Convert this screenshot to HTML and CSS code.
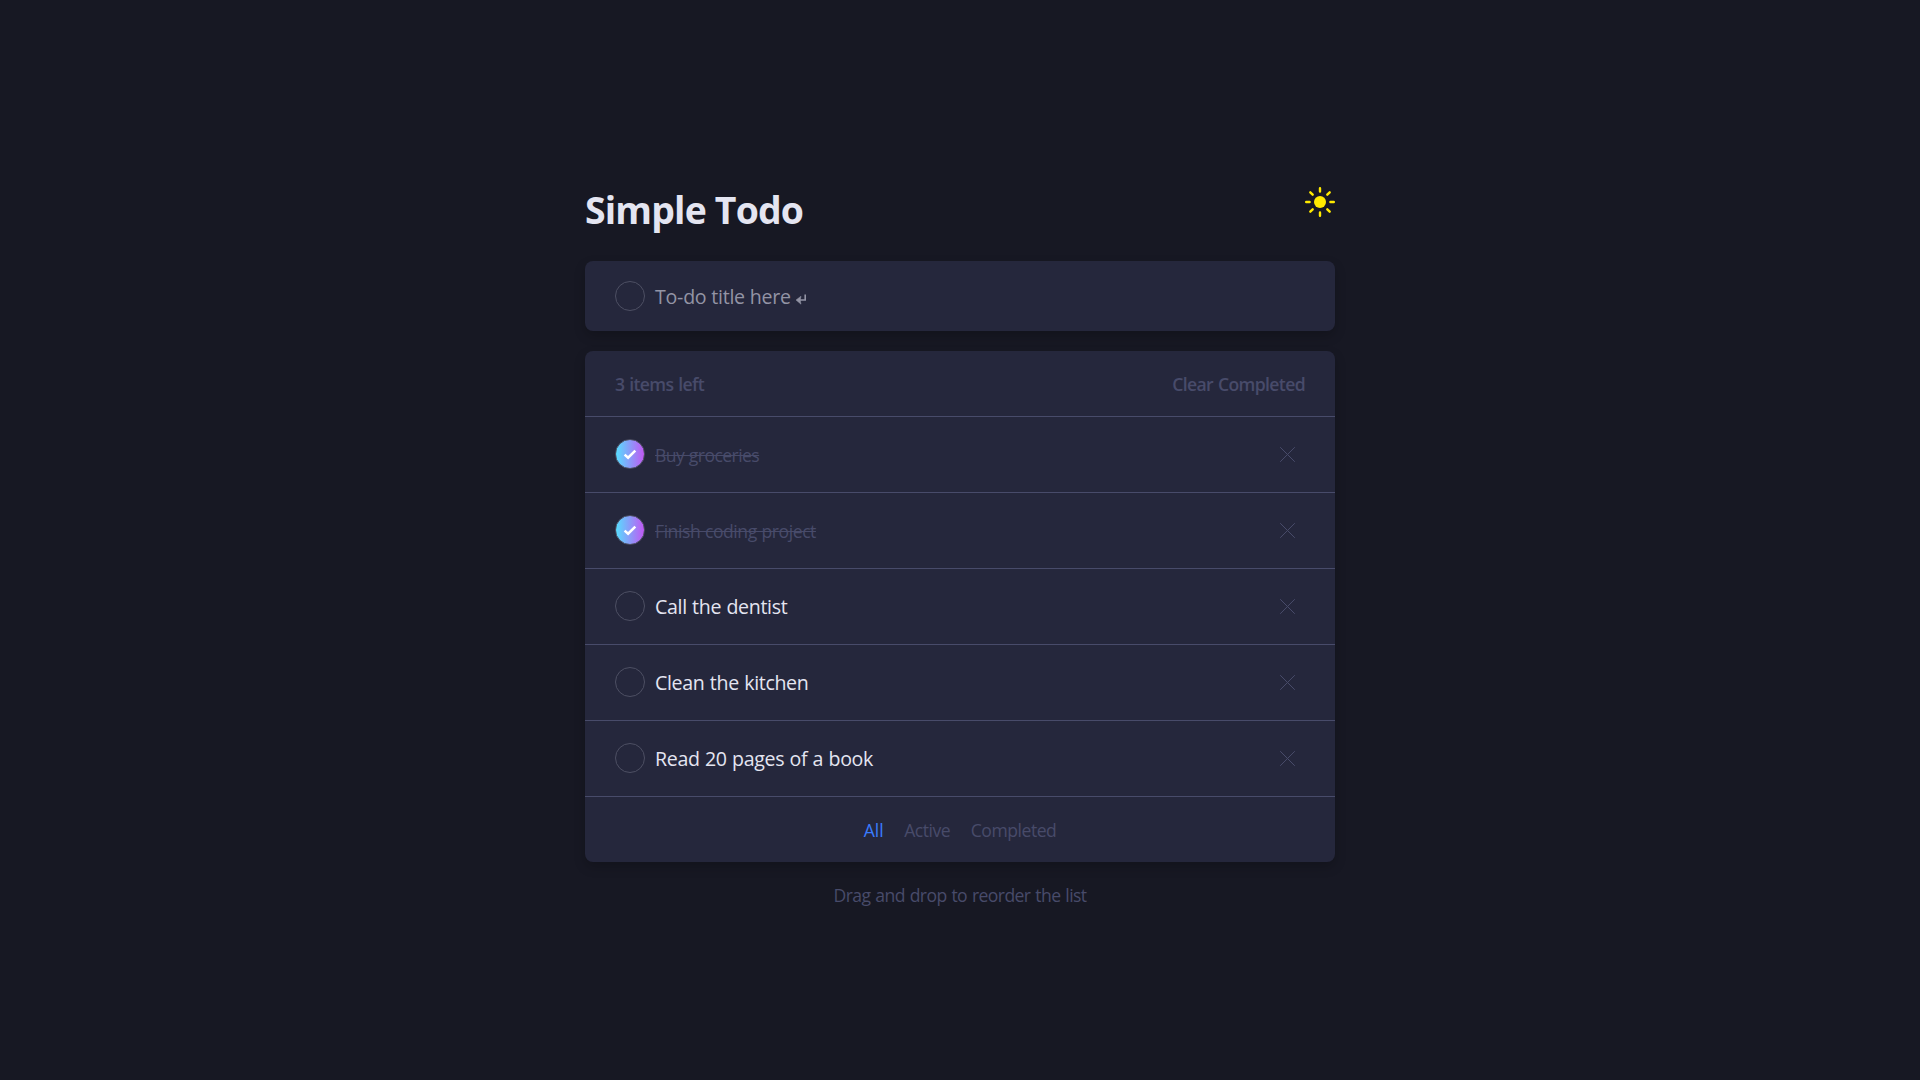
FILE: index.html
```
<!DOCTYPE html>
<html lang="en">
<head>
<meta charset="utf-8">
<title>Simple Todo</title>
<link rel="stylesheet" href="styles.css">
</head>
<body>
<svg width="0" height="0" class="defs" aria-hidden="true">
  <symbol id="cross" viewBox="0 0 15 15"><path d="M0.2 0.2L14.8 14.8M14.8 0.2L0.2 14.8" fill="none" stroke="currentColor" stroke-width="1"/></symbol>
  <symbol id="tick" viewBox="0 0 14 11"><path d="M1.6 5.6L5.1 8.7L12.3 1.7" fill="none" stroke="#fff" stroke-width="2.5"/></symbol>
</svg>
<main class="app">
  <header class="top">
    <h1 class="title">Simple Todo</h1>
    <svg class="sun" viewBox="0 0 30 30" fill="none" stroke="#ffea00" stroke-width="2.4" stroke-linecap="round">
      <circle cx="15" cy="15" r="6" fill="#ffea00" stroke="none"/>
      <path d="M15 1.2V4.6M15 25.4V28.8M1.2 15H4.6M25.4 15H28.8M5.3 5.3L7.7 7.7M22.3 22.3L24.7 24.7M5.3 24.7L7.7 22.3M22.3 7.7L24.7 5.3"/>
    </svg>
  </header>
  <section class="card entry">
    <span class="circle"></span>
    <span class="placeholder">To-do title here</span>
    <svg class="enter" viewBox="0 0 10 11"><path d="M9.2 0.5V6H4" fill="none" stroke="currentColor" stroke-width="1.6"/><path d="M0 6L5 2.2L4.2 6L5 10.2Z" fill="currentColor" stroke="currentColor" stroke-width="0.5"/></svg>
  </section>
  <section class="card">
    <div class="summary"><span class="count">3 items left</span><span class="clear">Clear Completed</span></div>
    <ul class="list">
      <li class="item done"><span class="circle"><svg class="tick"><use href="#tick"/></svg></span><span class="text">Buy groceries</span><svg class="cross"><use href="#cross"/></svg></li>
      <li class="item done"><span class="circle"><svg class="tick"><use href="#tick"/></svg></span><span class="text long">Finish coding project</span><svg class="cross"><use href="#cross"/></svg></li>
      <li class="item"><span class="circle"></span><span class="text">Call the dentist</span><svg class="cross"><use href="#cross"/></svg></li>
      <li class="item"><span class="circle"></span><span class="text">Clean the kitchen</span><svg class="cross"><use href="#cross"/></svg></li>
      <li class="item"><span class="circle"></span><span class="text">Read 20 pages of a book</span><svg class="cross"><use href="#cross"/></svg></li>
    </ul>
    <nav class="filters"><span class="active">All</span><span>Active</span><span>Completed</span></nav>
  </section>
  <p class="hint">Drag and drop to reorder the list</p>
</main>
</body>
</html>
```
FILE: styles.css
```
* { box-sizing: border-box; margin: 0; padding: 0; }
body {
  min-height: 100vh;
  background: #171823;
  color: #484b6a;
  font: 17.6px/24px "Open Sans", sans-serif;
  letter-spacing: -0.42px;
}
.defs { position: absolute; }
.app { width: 750px; margin: 0 auto; padding-top: 187px; }
.top { display: flex; justify-content: space-between; align-items: flex-start; height: 46px; margin-bottom: 28px; }
.title { color: #e4e5f1; font-size: 37.4px; font-weight: 700; line-height: 46px; letter-spacing: -0.82px; }
.sun { width: 30px; height: 30px; }
.card { background: #25273c; border-radius: 8px; box-shadow: 0 5px 12px rgba(0, 0, 0, 0.2); }
.entry { display: flex; align-items: center; height: 70px; padding: 0 30px; margin-bottom: 20px; color: #9394a5; }
.placeholder { margin-left: 10px; padding-top: 2px; font-size: 19.6px; letter-spacing: -0.25px; }
.enter { width: 10px; height: 11px; margin: 6px 0 0 5px; }
.circle {
  display: flex; flex: none; align-items: center; justify-content: center;
  width: 30px; height: 30px; border: 1px solid #4d4f63; border-radius: 50%;
}
.done .circle { background: linear-gradient(90deg, #57ddff, #c058f3); }
.tick { width: 14px; height: 11px; }
.summary {
  display: flex; justify-content: space-between; align-items: center;
  height: 66px; padding: 1px 30px 0; border-bottom: 1px solid #484b6a;
  font-weight: 600;
}
.count { letter-spacing: -0.66px; word-spacing: 1px; }
.clear { letter-spacing: -0.63px; word-spacing: 1px; }
.list { list-style: none; }
.item { display: flex; align-items: center; height: 76px; padding: 0 40px 0 30px; border-bottom: 1px solid #484b6a; }
.item .circle { margin-bottom: 1px; }
.text { margin-left: 10px; padding-top: 1px; color: #e4e5f1; font-size: 19.6px; font-weight: 530; letter-spacing: -0.34px; word-spacing: 0.6px; }
.done .text { color: #484b6a; font-size: 17.6px; font-weight: 400; letter-spacing: -0.58px; text-decoration: line-through; text-decoration-thickness: 1px; }
.done .long { letter-spacing: -0.45px; }
.cross { width: 15px; height: 15px; margin-left: auto; }
.filters { display: flex; justify-content: center; align-items: center; gap: 20.5px; height: 65px; padding-top: 1px; letter-spacing: -0.48px; }
.active { color: #3a7bfd; letter-spacing: 0; }
.hint { margin-top: 21px; text-align: center; letter-spacing: -0.6px; word-spacing: 0.9px; }
```
